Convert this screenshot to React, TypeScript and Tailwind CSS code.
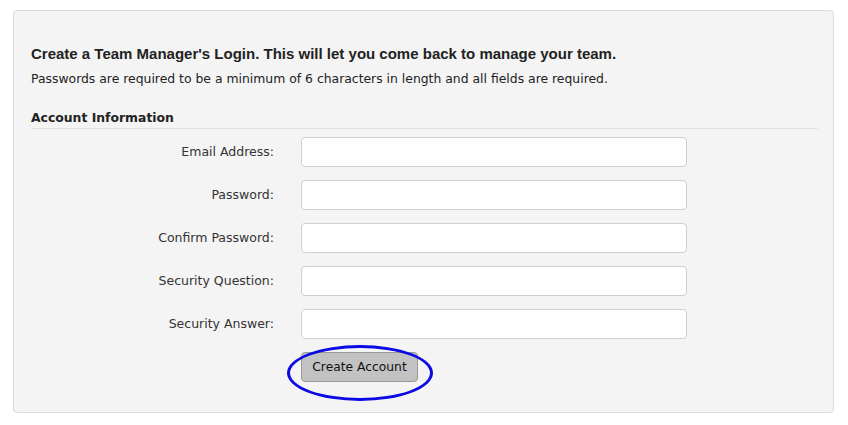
const fields = [
  'Email Address:',
  'Password:',
  'Confirm Password:',
  'Security Question:',
  'Security Answer:',
];

export default function App() {
  return (
    <div className="h-[425px] w-[848px] bg-white pl-[13px] pt-[10px]">
      <div className="h-[403px] w-[821px] rounded-[4px] border border-[#dcdcdc] bg-[#f4f4f4] pl-[17px] pr-[15px] pt-[33px] text-[#222]">
        <h1 className="text-[15px] font-bold leading-[20px] text-[#222] [font-family:'Liberation_Sans',Arial,sans-serif]">
          Create a Team Manager's Login. This will let you come back to manage your team.
        </h1>
        <p className="mt-[5px] text-[12.4px] leading-[20px] [font-family:'DejaVu_Sans',Verdana,sans-serif]">
          Passwords are required to be a minimum of 6 characters in length and all fields are required.
        </p>
        <div className="mt-[20px] border-b border-[#e2e2e2] pb-[1px]">
          <h2 className="text-[12.4px] font-bold leading-[18px] [font-family:'DejaVu_Sans',Verdana,sans-serif]">
            Account Information
          </h2>
        </div>
        <form className="mt-[8px] flex flex-col gap-[13px] [font-family:'DejaVu_Sans',Verdana,sans-serif]">
          {fields.map((label) => (
            <div key={label} className="flex items-center">
              <label className="w-[243px] text-right text-[12.5px] text-[#333]">{label}</label>
              <input
                type={label.includes('Password') ? 'password' : 'text'}
                className="ml-[27px] h-[30px] w-[386px] rounded-[4px] border border-[#cfcfcf] bg-white"
              />
            </div>
          ))}
          <div className="flex pl-[270px]">
            <div className="relative">
              <button
                type="button"
                className="h-[30px] w-[117px] rounded-[4px] border border-[#9a9a9a] bg-[#c2c2c2] text-[12.3px] text-[#111] [font-family:'DejaVu_Sans',Verdana,sans-serif]"
              >
                Create Account
              </button>
              <div className="pointer-events-none absolute left-[-14px] top-[-7px] h-[56px] w-[146px] rounded-[50%] border-[3px] border-[#0a0ae6]" />
            </div>
          </div>
        </form>
      </div>
    </div>
  );
}
